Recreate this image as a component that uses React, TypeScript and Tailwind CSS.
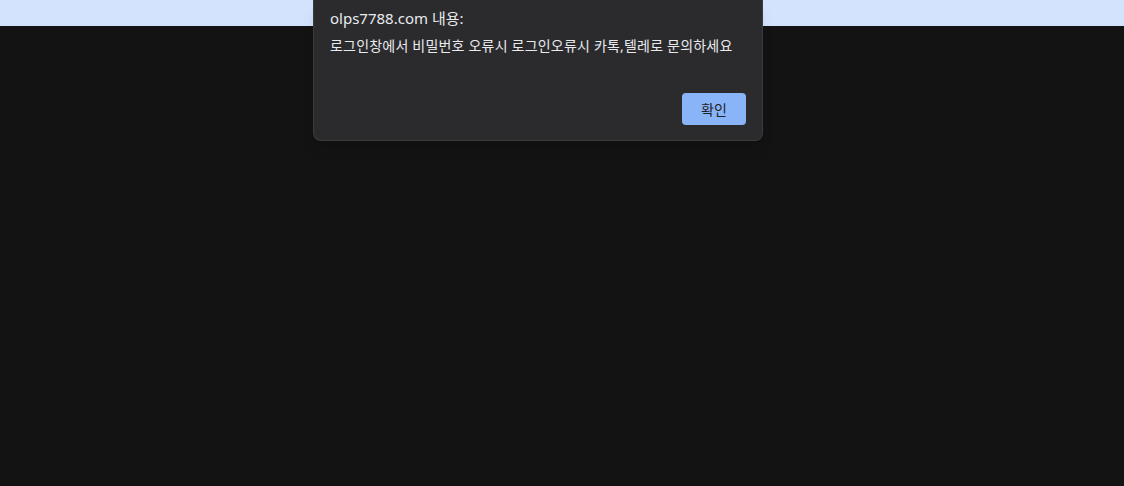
export default function App() {
  return (
    <div
      className="relative flex h-[486px] w-full flex-col overflow-hidden bg-[#131313]"
      style={{ fontFamily: '"Noto Sans", "Noto Sans CJK KR", sans-serif' }}
    >
      <div className="h-[26px] w-full bg-[#d3e3fd]" />
      <div className="flex-1 bg-[#131313]" />

      {/* alert dialog */}
      <div className="absolute left-[313px] top-0 flex h-[141px] w-[450px] flex-col rounded-b-lg border border-t-0 border-[#3c3c3c] bg-[#2b2b2d] px-[16px] shadow-lg">
        <div className="mt-[7px] text-[15px] leading-[22px] text-[#e8eaed]">
          olps7788.com 내용:
        </div>
        <div className="mt-[7px] text-[14px] leading-[20px] tracking-[0.2px] text-[#e8eaed]">
          로그인창에서 비밀번호 오류시 로그인오류시 카톡,텔레로 문의하세요
        </div>
        <div className="mt-auto mb-[15px] flex justify-end">
          <button className="h-[32px] w-[64px] rounded-[4px] bg-[#8ab4f8] text-[14px] text-[#202124]">
            확인
          </button>
        </div>
      </div>
    </div>
  );
}
